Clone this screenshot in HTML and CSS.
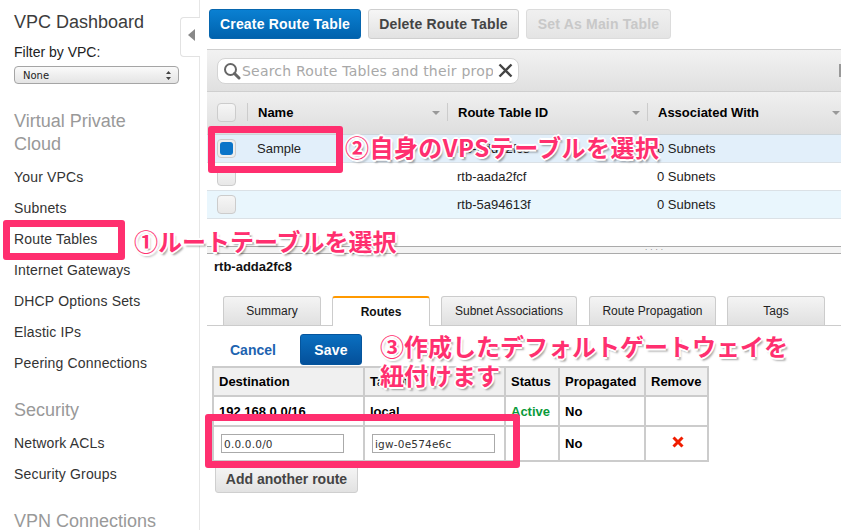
FILE: index.html
```html
<!DOCTYPE html>
<html>
<head>
  <title>VPC Route Tables</title>
  <meta name="viewport" content="width=device-width, initial-scale=1">
  <link rel="stylesheet" href="styles.css">
</head>
<body>
  <div class="page">
    <div class="sidebar">
      <h1 class="side-title">VPC Dashboard</h1>
      <div class="filter-label">Filter by VPC:</div>
      <div class="select-box">
        <span>None</span>
        <svg width="7" height="11" viewBox="0 0 7 11"><path d="M3.5 1 6 4H1zM3.5 10 1 7h5z" fill="#444"/></svg>
      </div>

      <h2 class="side-head first">Virtual Private<br>Cloud</h2>
      <a class="side-link">Your VPCs</a>
      <a class="side-link">Subnets</a>
      <a class="side-link">Route Tables</a>
      <a class="side-link">Internet Gateways</a>
      <a class="side-link">DHCP Options Sets</a>
      <a class="side-link">Elastic IPs</a>
      <a class="side-link">Peering Connections</a>

      <h2 class="side-head">Security</h2>
      <a class="side-link">Network ACLs</a>
      <a class="side-link">Security Groups</a>

      <h2 class="side-head">VPN Connections</h2>
    </div>

    <div class="main">
      <div class="toolbar">
        <button class="btn btn-blue create-btn">Create Route Table</button>
        <button class="btn btn-gray delete-btn">Delete Route Table</button>
        <button class="btn btn-off main-btn">Set As Main Table</button>
      </div>

      <div class="search-band">
        <div class="search-box">
          <svg class="search-icon" width="18" height="18" viewBox="0 0 18 18"><circle cx="7.5" cy="7.5" r="5.5" fill="none" stroke="#666" stroke-width="2"/><path d="M11.5 11.5 16 16" stroke="#666" stroke-width="3" stroke-linecap="round"/></svg>
          <span class="search-text">Search Route Tables and their prop</span>
          <svg class="clear-icon" width="15" height="15" viewBox="0 0 15 15"><path d="M1.5 1.5 13.5 13.5M13.5 1.5 1.5 13.5" stroke="#444" stroke-width="2.4"/></svg>
        </div>
        <span class="band-mark"></span>
      </div>

      <div class="grid-row grid-head">
        <div class="check-cell"><span class="check"></span></div>
        <div class="head-cell">Name<i class="sort"></i></div>
        <div class="head-cell">Route Table ID<i class="sort"></i></div>
        <div class="head-cell">Associated With<i class="sort sort-last"></i></div>
      </div>
      <div class="grid-row row-selected">
        <div class="check-cell"><span class="check checked"></span></div>
        <div class="cell">Sample</div>
        <div class="cell">rtb-adda2fc8</div>
        <div class="cell">0 Subnets</div>
      </div>
      <div class="grid-row">
        <div class="check-cell"><span class="check"></span></div>
        <div class="cell"></div>
        <div class="cell">rtb-aada2fcf</div>
        <div class="cell">0 Subnets</div>
      </div>
      <div class="grid-row row-alt">
        <div class="check-cell"><span class="check"></span></div>
        <div class="cell"></div>
        <div class="cell">rtb-5a94613f</div>
        <div class="cell">0 Subnets</div>
      </div>

      <div class="splitter"><span>....</span></div>

      <div class="detail-id">rtb-adda2fc8</div>

      <div class="tabs">
        <div class="tab tab-summary">Summary</div>
        <div class="tab tab-routes active">Routes</div>
        <div class="tab tab-subnets">Subnet Associations</div>
        <div class="tab tab-prop">Route Propagation</div>
        <div class="tab tab-tags">Tags</div>
      </div>

      <div class="edit-bar">
        <a class="cancel">Cancel</a>
        <button class="btn btn-blue save-btn">Save</button>
      </div>

      <table class="routes">
        <tr>
          <th class="col-dest">Destination</th>
          <th class="col-target">Target</th>
          <th class="col-status">Status</th>
          <th class="col-prop">Propagated</th>
          <th class="col-remove">Remove</th>
        </tr>
        <tr class="row-local">
          <td>192.168.0.0/16</td>
          <td>local</td>
          <td class="active-text">Active</td>
          <td>No</td>
          <td></td>
        </tr>
        <tr class="row-new">
          <td><input class="route-input" value="0.0.0.0/0"></td>
          <td><input class="route-input" value="igw-0e574e6c"></td>
          <td></td>
          <td>No</td>
          <td class="remove-cell"><svg width="12" height="12" viewBox="0 0 12 12"><path d="M1.5 1.5 10.5 10.5M10.5 1.5 1.5 10.5" stroke="#f01d00" stroke-width="3"/></svg></td>
        </tr>
      </table>

      <button class="btn btn-gray add-btn">Add another route</button>
    </div>

    <!-- collapse tab -->
    <div class="collapse-tab"><i></i></div>

    <!-- annotations drawn over the screenshot -->
    <div class="mark mark-route"></div>
    <div class="mark mark-sample"></div>
    <div class="mark mark-input"></div>
    <div class="note note-1">①ルートテーブルを選択</div>
    <div class="note note-2">②自身のVPSテーブルを選択</div>
    <div class="note note-3">③作成したデフォルトゲートウェイを<br>紐付けます</div>
  </div>
</body>
</html>
```

FILE: styles.css
```css
html, body {
  margin: 0;
  height: 100%;
  background: #fff;
}

body {
  font-family: "Liberation Sans", Arial, sans-serif;
  color: #222;
  overflow: hidden;
}

.page {
  position: relative;
  display: flex;
  width: 841px;
  height: 530px;
  overflow: hidden;
}

/* sidebar */
.sidebar {
  box-sizing: border-box;
  width: 200px;
  flex: none;
  padding: 12px 14px 0;
  border-right: 1px solid #e6e6e6;
}

.side-title {
  margin: 0;
  font-size: 18px;
  line-height: 21px;
  font-weight: normal;
  color: #3c3c3c;
}

.filter-label {
  margin-top: 9px;
  font-size: 14px;
  line-height: 20px;
}

.select-box {
  box-sizing: border-box;
  display: flex;
  align-items: center;
  justify-content: space-between;
  width: 165px;
  height: 18px;
  margin-top: 4px;
  padding: 0 6px 0 8px;
  border: 1px solid #a5a5a5;
  border-radius: 4px;
  background: linear-gradient(#fafafa, #e4e4e4);
  font-family: "DejaVu Sans", sans-serif;
  font-size: 10px;
}

.side-head {
  margin: 27px 0 0;
  font-size: 18px;
  line-height: 23px;
  font-weight: normal;
  white-space: nowrap;
  color: #999;
}

.side-head.first {
  margin-top: 26px;
}

.side-link {
  display: block;
  margin-top: 13px;
  font-size: 14px;
  line-height: 18px;
  letter-spacing: 0.17px;
  color: #333;
}

.side-head + .side-link {
  margin-top: 12px;
}

/* main */
.main {
  flex: 1;
  min-width: 0;
  margin-left: 7px;
}

.toolbar {
  display: flex;
  height: 30px;
  margin: 9px 0 10px 2px;
}

.btn {
  box-sizing: border-box;
  border-radius: 3px;
  font-family: "Liberation Sans", Arial, sans-serif;
  font-size: 14px;
  font-weight: bold;
  letter-spacing: 0.2px;
  padding: 0;
}

.btn-blue {
  border: 1px solid #0766ae;
  background: linear-gradient(#0a80d2, #0062ad);
  color: #fff;
}

.btn-gray {
  border: 1px solid #cfcfcf;
  background: linear-gradient(#f6f6f6, #e2e2e2);
  color: #444;
}

.btn-off {
  border: 1px solid #dcdcdc;
  background: linear-gradient(#f0f0f0, #e4e4e4);
  color: #c8c8c8;
}

.create-btn { width: 152px; }
.delete-btn { width: 151px; margin-left: 7px; }
.main-btn { width: 145px; margin-left: 7px; }

.search-band {
  box-sizing: border-box;
  display: flex;
  align-items: center;
  justify-content: space-between;
  height: 43px;
  padding: 0 0 0 10px;
  border-top: 1px solid #cfcfcf;
  border-bottom: 1px solid #cfcfcf;
  background: linear-gradient(#f2f2f2, #e0e0e0);
}

.search-box {
  box-sizing: border-box;
  display: flex;
  align-items: center;
  width: 302px;
  height: 26px;
  padding: 0 5px;
  border: 1px solid #d4d4d4;
  border-radius: 8px;
  background: #fff;
}

.search-icon { flex: none; }

.search-text {
  flex: 1;
  min-width: 0;
  margin-left: 1px;
  overflow: hidden;
  white-space: nowrap;
  font-family: "DejaVu Sans", sans-serif;
  font-size: 14px;
  letter-spacing: 0.2px;
  color: #a8a8a8;
}

.clear-icon { flex: none; margin-left: 5px; }

.band-mark {
  width: 2px;
  height: 13px;
  background: #999;
}

.grid-row {
  box-sizing: border-box;
  display: grid;
  grid-template-columns: 40px 200px 200px 1fr;
  height: 28px;
  border-bottom: 1px solid #dbe1e6;
  font-size: 13px;
}

.grid-head {
  height: 43px;
  padding-bottom: 2px;
  border-bottom: 1px solid #cdd5da;
  background: linear-gradient(#f0f0f0, #dedede);
  font-weight: bold;
  color: #000;
}

.row-selected { background: #e2effa; }
.row-alt { background: #e9f6fd; }

.check-cell {
  display: flex;
  align-items: center;
  justify-content: center;
}

.check {
  box-sizing: border-box;
  display: block;
  width: 19px;
  height: 19px;
  margin-left: -1px;
  border: 1px solid #ccc;
  border-radius: 4px;
  background: linear-gradient(#f6f6f6, #e8e8e8);
}

.check.checked {
  position: relative;
  background: #eee;
}

.check.checked::after {
  content: "";
  position: absolute;
  left: 2px;
  top: 2px;
  width: 13px;
  height: 13px;
  border-radius: 3px;
  background: #0a74c8;
}

.head-cell {
  position: relative;
  display: flex;
  align-items: center;
  padding-left: 11px;
}

.head-cell::before {
  content: "";
  position: absolute;
  left: 0;
  top: 11px;
  height: 18px;
  border-left: 1px solid #ccc;
}

.sort {
  position: absolute;
  right: 7px;
  top: 19px;
  border: 4px solid transparent;
  border-top: 4px solid #999;
  border-bottom: 0;
}

.sort-last { right: 1px; }

.cell {
  display: flex;
  align-items: center;
  padding-left: 10px;
  color: #222;
}

.splitter {
  box-sizing: border-box;
  height: 8px;
  margin-top: 27px;
  padding-left: 438px;
  border-top: 1px solid #aaa;
  border-bottom: 1px solid #aaa;
  background: #f3f3f3;
  font-size: 8px;
  line-height: 2px;
  letter-spacing: 3px;
  color: #777;
}

.detail-id {
  margin: 6px 0 0 7px;
  font-size: 13px;
  line-height: 14px;
  font-weight: bold;
  color: #111;
}

.tabs {
  box-sizing: border-box;
  display: flex;
  height: 30px;
  margin-top: 22px;
  padding-left: 16px;
  border-bottom: 1px solid #ccc;
}

.tab {
  box-sizing: border-box;
  height: 29px;
  border: 1px solid #ccc;
  border-bottom: 0;
  border-radius: 3px 3px 0 0;
  background: linear-gradient(#f4f4f4, #e0e0e0);
  text-align: center;
  font-size: 12px;
  line-height: 28px;
  color: #222;
}

.tab-summary { width: 98px; }
.tab-routes { width: 98px; margin-left: 11px; }
.tab-subnets { width: 136px; margin-left: 11px; }
.tab-prop { width: 127px; margin-left: 12px; }
.tab-tags { width: 98px; margin-left: 11px; }

.tab.active {
  height: 30px;
  border-top: 2px solid #f90;
  background: #fff;
  font-weight: bold;
  color: #111;
}

.edit-bar {
  display: flex;
  align-items: center;
  height: 31px;
  margin-top: 8px;
  padding-left: 23px;
}

.cancel {
  width: 70px;
  font-size: 14px;
  font-weight: bold;
  color: #1d63b0;
}

.save-btn {
  width: 62px;
  height: 31px;
  border-color: #05559d;
  background: linear-gradient(#0a6fc0, #04509a);
}

.routes {
  table-layout: fixed;
  width: 495px;
  margin: 1px 0 0 5px;
  border-collapse: collapse;
  font-size: 13px;
  font-weight: bold;
  color: #000;
}

.routes th, .routes td {
  box-sizing: border-box;
  padding: 0 0 0 5px;
  border: 2px solid #ccc;
  text-align: left;
}

.routes th {
  height: 29px;
  background: #f0f0f0;
}

.routes td { height: 30px; }
.routes .row-new td { height: 35px; }

.col-dest { width: 151px; }
.col-target { width: 141px; }
.col-status { width: 54px; }
.col-prop { width: 86px; }
.col-remove { width: 63px; }

.active-text { color: #0a9a3a; }

.route-input {
  box-sizing: border-box;
  display: block;
  width: 123px;
  height: 19px;
  margin-left: 2px;
  padding: 0 2px;
  border: 1px solid #aaa;
  font-family: "DejaVu Sans", sans-serif;
  font-size: 10.5px;
  letter-spacing: 0.2px;
  color: #333;
}

.routes .remove-cell {
  padding: 0 0 0 3px;
  text-align: center;
}

.remove-cell svg {
  display: block;
  margin: -4px auto 0;
}

.add-btn {
  display: block;
  width: 143px;
  height: 29px;
  margin: 2px 0 0 8px;
  letter-spacing: 0;
}

/* overlays */
.collapse-tab {
  position: absolute;
  left: 180px;
  top: 17px;
  box-sizing: border-box;
  width: 20px;
  height: 40px;
  border: 1px solid #e2e2e2;
  border-right: 0;
  border-radius: 4px 0 0 4px;
  background: #fff;
}

.collapse-tab i {
  position: absolute;
  left: 7px;
  top: 11px;
  border: 6px solid transparent;
  border-right: 7px solid #888;
  border-left: 0;
}

.mark {
  position: absolute;
  box-sizing: border-box;
  border: 7px solid #ff2f6f;
  border-radius: 3px;
}

.mark-route { left: 3px; top: 220px; width: 122px; height: 40px; }
.mark-sample { left: 208px; top: 126px; width: 135px; height: 47px; }
.mark-input { left: 205px; top: 414px; width: 315px; height: 54px; }

.note {
  position: absolute;
  font-family: "Noto Sans CJK JP", sans-serif;
  font-size: 24px;
  line-height: 29px;
  font-weight: bold;
  white-space: nowrap;
  color: #ff2f6f;
  text-shadow: -2px 0 #fff, 2px 0 #fff, 0 -2px #fff, 0 2px #fff, -1px -1px #fff, 1px -1px #fff, -1px 1px #fff, 2px 3px 2px rgba(0, 0, 0, 0.35);
}

.note-1 { left: 134px; top: 226px; }
.note-2 { left: 345px; top: 132px; letter-spacing: 0.45px; }
.note-3 { left: 380px; top: 331px; }
```
